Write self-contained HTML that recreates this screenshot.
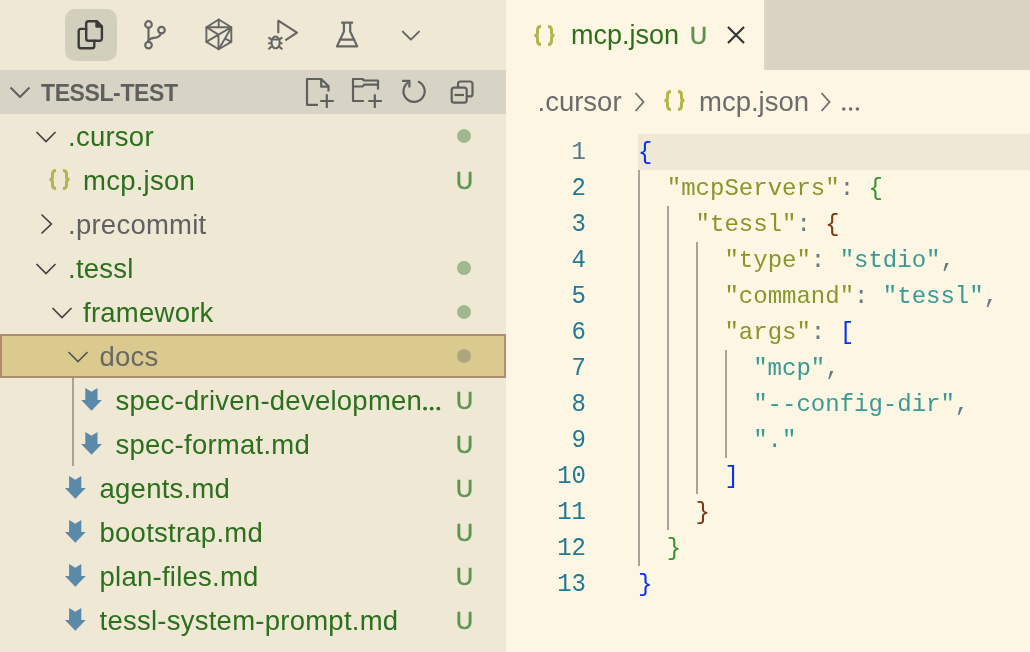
<!DOCTYPE html>
<html><head><meta charset="utf-8">
<style>
*{margin:0;padding:0;box-sizing:border-box}
html,body{width:1030px;height:652px;overflow:hidden;background:#FDF6E3;font-family:"Liberation Sans",sans-serif}
#side{will-change:transform;position:absolute;left:0;top:0;width:506px;height:652px;background:#EEE8D5}
#act{position:absolute;left:0;top:0;width:506px;height:70px}
#act .sel{position:absolute;left:65px;top:9px;width:52px;height:52px;border-radius:10px;background:#D3CFBD}
#act svg,#hdr svg{position:absolute;left:0;top:0}
#hdr{position:absolute;left:0;top:70px;width:506px;height:44px;background:#D8D4C5}
#hdr .t{position:absolute;left:41px;top:1px;line-height:44px;font-size:23px;font-weight:bold;color:#5F5F5F;letter-spacing:-0.4px}
.row{position:absolute;left:0;width:506px;height:44px}
.row .lbl{position:absolute;top:1px;line-height:44px;font-size:27.5px;letter-spacing:0.25px;white-space:nowrap}
.g{color:#2C6F1C}
.gr{color:#616161}
.dot{position:absolute;left:457px;top:15px;width:14px;height:14px;border-radius:50%;background:#9DB98D}
.u{position:absolute;left:456px;top:1px;line-height:44px;font-size:23.5px;color:#5E9550;-webkit-text-stroke:0.55px #5E9550}
#selrow{background:#DBCA8E;box-shadow:inset 0 0 0 2px #AF8D6E}
#editor{will-change:transform;position:absolute;left:506px;top:0;width:524px;height:652px;background:#FDF6E3}
#tabs{position:absolute;left:0;top:0;width:524px;height:70px;background:#D9D3C3}
#tab{position:absolute;left:0;top:0;width:258px;height:70px;background:#FDF6E3}
.code{position:absolute;left:132px;font-family:"Liberation Mono",monospace;font-size:24px;line-height:36px;white-space:pre;color:#657B83}
.ln{position:absolute;left:0;width:80px;height:36px;transform:scaleY(1.11);transform-origin:50% 17.5px;text-align:right;font-family:"Liberation Mono",monospace;font-size:24px;line-height:36px;color:#237893}
.k{color:#87972A}.s{color:#389A94}.b1{color:#0431FA}.b2{color:#319331}.b3{color:#7B3814}
.tl{position:absolute;top:0;line-height:70px;font-size:27px;white-space:nowrap}
.tu{position:absolute;top:1px;line-height:70px;font-size:23.5px;color:#5F9150;-webkit-text-stroke:0.55px #5F9150}
.cl{position:absolute;top:80px;line-height:44px;font-size:27.5px;color:#6C6C6C;white-space:nowrap}
#lh{position:absolute;left:132px;top:134px;width:392px;height:36px;background:#EEE8D5}
.ig{position:absolute;width:2px;background:#A6A49A}
</style></head><body>
<div id="side">
  <div id="act">
    <div class="sel"></div>
    <svg width="506" height="70" viewBox="0 0 506 70" fill="none" stroke-linecap="round" stroke-linejoin="round">
      <g stroke="#3B3B3B" stroke-width="2.4">
        <path d="M86.2 28.9 H81 a2.3 2.3 0 0 0 -2.3 2.3 V46 a2.3 2.3 0 0 0 2.3 2.3 H92 a2.3 2.3 0 0 0 2.3 -2.3 V40.8"/>
        <path d="M88.5 21.2 H96.5 L101.9 26.6 V38.5 a2.3 2.3 0 0 1 -2.3 2.3 H88.5 a2.3 2.3 0 0 1 -2.3 -2.3 V23.5 a2.3 2.3 0 0 1 2.3 -2.3 Z"/>
        <path d="M96.5 21.2 V26.6 H101.9 Z" fill="#3B3B3B"/>
      </g>
      <g stroke="#666" stroke-width="2.2">
        <circle cx="148.5" cy="24.5" r="3.3"/>
        <circle cx="161.5" cy="30.1" r="3.3"/>
        <circle cx="148.5" cy="45.1" r="3.3"/>
        <path d="M148.5 27.8 V41.8"/>
        <path d="M161 33.4 Q159.5 37.5 154 37.9 Q150 38.3 148.5 40.5"/>
      </g>
      <g stroke="#666" stroke-width="1.9">
        <path d="M218.7 19.5 L231.3 27.2 V41.9 L218.7 49.3 L206.4 41.9 V27.2 Z"/>
        <path d="M218.7 19.5 V27.2 M206.4 27.2 H231.3 M206.4 27.2 L218.5 34.6 L231.3 27.2 M218.5 34.6 V49.3 M218.5 34.6 L206.4 41.9 M218.7 49.3 L230.8 28.5 M225.8 38.8 L231.3 41.9"/>
      </g>
      <g stroke="#666" stroke-width="2.1" stroke-linecap="butt">
        <path d="M278.3 33.3 V20.7 L297 32.7 L285.3 40.4"/>
        <ellipse cx="275.6" cy="42.4" rx="4.1" ry="5.9"/>
        <path d="M271.5 39.5 H279.2 M268.4 37.3 L271.6 39.6 M282.3 37.3 L279.1 39.6 M268.2 43.3 H271.4 M279.3 43.3 H282.5 M268.4 49.3 L271.6 46.5 M282.3 49.3 L279.1 46.5"/>
      </g>
      <g stroke="#666" stroke-width="2.2">
        <path d="M342 22.7 H352.2 M343.9 22.7 V31.5 L337 46.4 H357.2 L350.2 31.5 V22.7 M339.8 39.6 H354.3"/>
        <path d="M402.8 31.6 L410.9 39.6 L419 31.6" stroke-width="2"/>
      </g>
    </svg>
  </div>
  <div id="hdr">
    <svg width="506" height="44" viewBox="0 70 506 44" fill="none" stroke-linecap="butt" stroke-linejoin="round">
      <path d="M10.5 87.5 L20 97 L29.5 87.5" stroke="#5F5F5F" stroke-width="2"/>
      <g stroke="#5F5F5F" stroke-width="2.2">
        <g transform="translate(-1 0)"><path d="M319 104.8 H308 V79 H322.2 L329.5 86 V91.4 M322.2 79 V86.7 H329.5"/>
        
        <path d="M364.9 101 H354 V79 H363.4 L365.4 80.5 H379 V89.4 M354 86.5 H363.4 L365.4 84.6 H379"/>
        </g><path d="M320.2 101 H333.8 M326.8 94.3 V107.9"/><path d="M368.3 101 H381.9 M374.8 94.3 V107.9"/>
        <path d="M418 81.5 A10.6 10.6 0 1 1 408.4 82.4"/>
        <path d="M402.1 80.9 H409.4 V87.5"/>
        <rect x="451.7" y="87.7" width="15" height="15" rx="2.5"/>
        <path d="M458 87.7 V84 a2.5 2.5 0 0 1 2.5 -2.5 H470 a2.5 2.5 0 0 1 2.5 2.5 V93.9 a2.5 2.5 0 0 1 -2.5 2.5 H466.7"/>
        <path d="M454.5 95 H464"/>
      </g>
    </svg>
    <div class="t">TESSL-TEST</div>
  </div>
  <div id="tree">
<div class="row" style="top:114px"><svg width="506" height="44" style="position:absolute;left:0;top:0" stroke-linecap="butt" stroke-linejoin="miter"><path d="M36.5 18 L46 27.5 L55.5 18" stroke="#424242" stroke-width="1.7" fill="none"/></svg><div class="lbl g" style="left:68.0px">.cursor</div><div class="dot"></div></div>
<div class="row" style="top:158px"><svg width="24" height="24" viewBox="0 0 24 24" style="position:absolute;left:48px;top:10px" fill="none" stroke="#B3B44A" stroke-width="3" stroke-linecap="butt"><path d="M8 2.5 Q4.5 2.5 4.5 6 V9 Q4.5 11.5 1.5 11.5 Q4.5 11.5 4.5 14 V17 Q4.5 20.5 8 20.5"/><path d="M15 2.5 Q18.5 2.5 18.5 6 V9 Q18.5 11.5 21.5 11.5 Q18.5 11.5 18.5 14 V17 Q18.5 20.5 15 20.5"/></svg><div class="lbl g" style="left:83.0px">mcp.json</div><div class="u">U</div></div>
<div class="row" style="top:202px"><svg width="506" height="44" style="position:absolute;left:0;top:0" stroke-linecap="butt" stroke-linejoin="miter"><path d="M41.5 12.5 L51.3 22 L41.5 31.5" stroke="#424242" stroke-width="1.7" fill="none"/></svg><div class="lbl gr" style="left:68.0px">.precommit</div></div>
<div class="row" style="top:246px"><svg width="506" height="44" style="position:absolute;left:0;top:0" stroke-linecap="butt" stroke-linejoin="miter"><path d="M36.5 18 L46 27.5 L55.5 18" stroke="#424242" stroke-width="1.7" fill="none"/></svg><div class="lbl g" style="left:68.0px">.tessl</div><div class="dot"></div></div>
<div class="row" style="top:290px"><svg width="506" height="44" style="position:absolute;left:0;top:0" stroke-linecap="butt" stroke-linejoin="miter"><path d="M52.5 18 L62 27.5 L71.5 18" stroke="#424242" stroke-width="1.7" fill="none"/></svg><div class="lbl g" style="left:83.0px">framework</div><div class="dot"></div></div>
<div class="row" id="selrow" style="top:334px"><svg width="506" height="44" style="position:absolute;left:0;top:0" stroke-linecap="butt" stroke-linejoin="miter"><path d="M68.5 18 L78 27.5 L87.5 18" stroke="#555555" stroke-width="1.7" fill="none"/></svg><div class="lbl gr" style="color:#686865;left:99.5px">docs</div><div class="dot" style="background:#ADA67F"></div></div>
<div class="row" style="top:378px"><svg width="506" height="44" style="position:absolute;left:0;top:0" stroke-linecap="butt" stroke-linejoin="miter"><path d="M85.3 10 L91.5 13.8 L97.5 10 V22.1 H101.9 L91.5 32.8 L81.2 22.1 H85.3 Z" fill="#5A89AA"/></svg><div class="lbl g" style="left:115.5px">spec-driven-developmen</div><svg width="30" height="10" style="position:absolute;left:420px;top:0;overflow:visible" fill="#2C6F1C"><circle cx="5.1" cy="30.6" r="1.9"/><circle cx="11.7" cy="30.6" r="1.9"/><circle cx="18.3" cy="30.6" r="1.9"/></svg><div class="u">U</div></div>
<div class="row" style="top:422px"><svg width="506" height="44" style="position:absolute;left:0;top:0" stroke-linecap="butt" stroke-linejoin="miter"><path d="M85.3 10 L91.5 13.8 L97.5 10 V22.1 H101.9 L91.5 32.8 L81.2 22.1 H85.3 Z" fill="#5A89AA"/></svg><div class="lbl g" style="left:115.5px">spec-format.md</div><div class="u">U</div></div>
<div class="row" style="top:466px"><svg width="506" height="44" style="position:absolute;left:0;top:0" stroke-linecap="butt" stroke-linejoin="miter"><path d="M69.1 10 L75.3 13.8 L81.3 10 V22.1 H85.7 L75.3 32.8 L65.0 22.1 H69.1 Z" fill="#5A89AA"/></svg><div class="lbl g" style="left:99.5px">agents.md</div><div class="u">U</div></div>
<div class="row" style="top:510px"><svg width="506" height="44" style="position:absolute;left:0;top:0" stroke-linecap="butt" stroke-linejoin="miter"><path d="M69.1 10 L75.3 13.8 L81.3 10 V22.1 H85.7 L75.3 32.8 L65.0 22.1 H69.1 Z" fill="#5A89AA"/></svg><div class="lbl g" style="left:99.5px">bootstrap.md</div><div class="u">U</div></div>
<div class="row" style="top:554px"><svg width="506" height="44" style="position:absolute;left:0;top:0" stroke-linecap="butt" stroke-linejoin="miter"><path d="M69.1 10 L75.3 13.8 L81.3 10 V22.1 H85.7 L75.3 32.8 L65.0 22.1 H69.1 Z" fill="#5A89AA"/></svg><div class="lbl g" style="left:99.5px">plan-files.md</div><div class="u">U</div></div>
<div class="row" style="top:598px"><svg width="506" height="44" style="position:absolute;left:0;top:0" stroke-linecap="butt" stroke-linejoin="miter"><path d="M69.1 10 L75.3 13.8 L81.3 10 V22.1 H85.7 L75.3 32.8 L65.0 22.1 H69.1 Z" fill="#5A89AA"/></svg><div class="lbl g" style="left:99.5px">tessl-system-prompt.md</div><div class="u">U</div></div>
<div style="position:absolute;left:72px;top:378px;width:2px;height:88px;background:#A5A39A"></div>
  </div>
</div>
<div id="editor">
  <div id="tabs"><div style="position:absolute;left:258px;top:0;width:2px;height:70px;background:#DDD7C4"></div><div id="tab">
    <svg width="24" height="24" viewBox="0 0 24 24" style="position:absolute;left:27px;top:24px" fill="none" stroke="#B3B44A" stroke-width="3" stroke-linecap="butt"><path d="M8 2.5 Q4.5 2.5 4.5 6 V9 Q4.5 11.5 1.5 11.5 Q4.5 11.5 4.5 14 V17 Q4.5 20.5 8 20.5"/><path d="M15 2.5 Q18.5 2.5 18.5 6 V9 Q18.5 11.5 21.5 11.5 Q18.5 11.5 18.5 14 V17 Q18.5 20.5 15 20.5"/></svg>
    <div class="tl g" style="left:65px">mcp.json</div>
    <div class="tu" style="left:184px">U</div>
    <svg width="24" height="24" style="position:absolute;left:220px;top:25px" fill="none" stroke="#333" stroke-width="2.2"><path d="M2 2 L18 18 M18 2 L2 18"/></svg>
  </div></div>
  <div id="crumbs">
    <div class="cl" style="left:31.5px">.cursor</div>
    <svg width="16" height="24" style="position:absolute;left:127.5px;top:90.5px" fill="none" stroke="#6f6f6f" stroke-width="1.8"><path d="M1.5 2 L9.5 11 L1.5 20"/></svg>
    <svg width="24" height="24" viewBox="0 0 24 24" style="position:absolute;left:156.7px;top:88.5px" fill="none" stroke="#B3B44A" stroke-width="3" stroke-linecap="butt"><path d="M8 2.5 Q4.5 2.5 4.5 6 V9 Q4.5 11.5 1.5 11.5 Q4.5 11.5 4.5 14 V17 Q4.5 20.5 8 20.5"/><path d="M15 2.5 Q18.5 2.5 18.5 6 V9 Q18.5 11.5 21.5 11.5 Q18.5 11.5 18.5 14 V17 Q18.5 20.5 15 20.5"/></svg>
    <div class="cl" style="left:193px">mcp.json</div>
    <svg width="16" height="24" style="position:absolute;left:313.5px;top:90.5px" fill="none" stroke="#6f6f6f" stroke-width="1.8"><path d="M1.5 2 L9.5 11 L1.5 20"/></svg>
    <svg width="30" height="10" style="position:absolute;left:332px;top:104px" fill="#6C6C6C"><circle cx="5.8" cy="5.1" r="1.75"/><circle cx="12.6" cy="5.1" r="1.75"/><circle cx="19.4" cy="5.1" r="1.75"/></svg>
  </div>
  <div id="lh"></div>
  <div id="guides">
    <div class="ig" style="left:132px;top:170px;height:396px"></div>
    <div class="ig" style="left:161px;top:206px;height:324px"></div>
    <div class="ig" style="left:190px;top:242px;height:252px"></div>
    <div class="ig" style="left:219px;top:350px;height:108px"></div>
  </div>
  <div class="ln" style="top:134px;color:#567983">1</div><div class="ln" style="top:170px">2</div><div class="ln" style="top:206px">3</div><div class="ln" style="top:242px">4</div><div class="ln" style="top:278px">5</div><div class="ln" style="top:314px">6</div><div class="ln" style="top:350px">7</div><div class="ln" style="top:386px">8</div><div class="ln" style="top:422px">9</div><div class="ln" style="top:458px">10</div><div class="ln" style="top:494px">11</div><div class="ln" style="top:530px">12</div><div class="ln" style="top:566px">13</div>
  <div class="code" style="top:135px"><span class="b1">{</span>
  <span class="k">"mcpServers"</span>: <span class="b2">{</span>
    <span class="k">"tessl"</span>: <span class="b3">{</span>
      <span class="k">"type"</span>: <span class="s">"stdio"</span>,
      <span class="k">"command"</span>: <span class="s">"tessl"</span>,
      <span class="k">"args"</span>: <span class="b1">[</span>
        <span class="s">"mcp"</span>,
        <span class="s">"--config-dir"</span>,
        <span class="s">"."</span>
      <span class="b1">]</span>
    <span class="b3">}</span>
  <span class="b2">}</span>
<span class="b1">}</span></div>
</div>
</body></html>
